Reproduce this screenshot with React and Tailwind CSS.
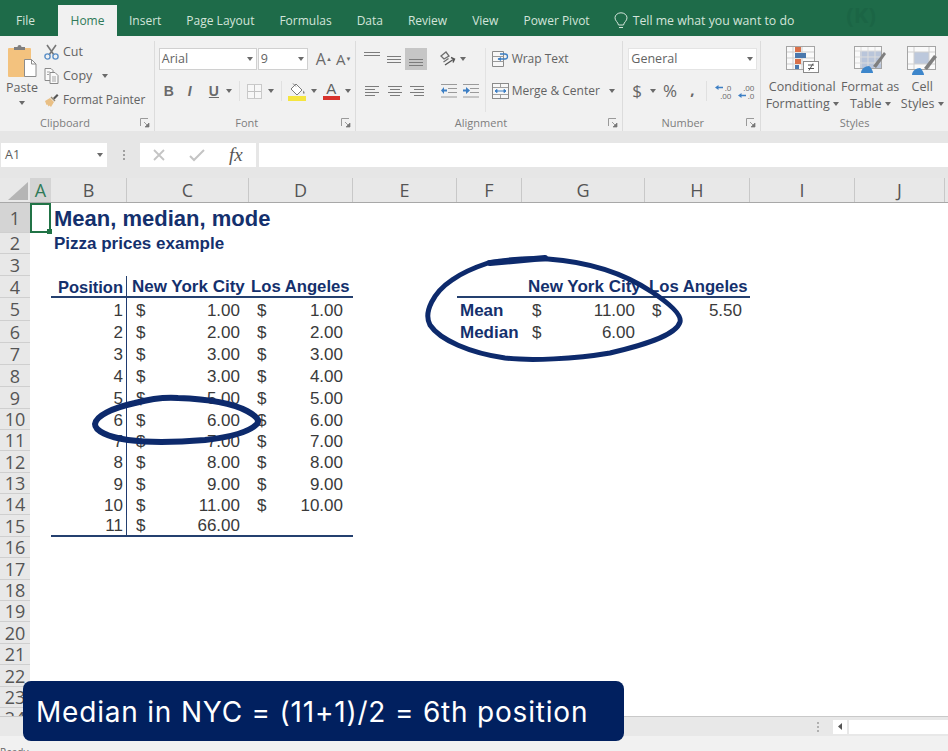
import React from 'react';

const uiFont = 'font-["Open_Sans",sans-serif]';
const cellFont = 'font-["Liberation_Sans",Arial,sans-serif]';

const tabs = ['Insert', 'Page Layout', 'Formulas', 'Data', 'Review', 'View', 'Power Pivot'];

const columns = [
  { label: 'A', w: 'w-[21px]' },
  { label: 'B', w: 'w-[76px]' },
  { label: 'C', w: 'w-[122px]' },
  { label: 'D', w: 'w-[104px]' },
  { label: 'E', w: 'w-[104px]' },
  { label: 'F', w: 'w-[65px]' },
  { label: 'G', w: 'w-[123px]' },
  { label: 'H', w: 'w-[105px]' },
  { label: 'I', w: 'w-[105px]' },
  { label: 'J', w: 'w-[90px]' },
];

const rowHeights = {
  1: 'h-[30px]', 2: 'h-[21px]', 3: 'h-[22px]', 4: 'h-[22px]', 5: 'h-[23px]', 6: 'h-[22px]',
  7: 'h-[22px]', 8: 'h-[22px]', 9: 'h-[22px]', 10: 'h-[21px]', 11: 'h-[21px]', 12: 'h-[22px]',
  13: 'h-[21px]', 14: 'h-[21px]', 15: 'h-[22px]', 16: 'h-[21px]', 17: 'h-[22px]', 18: 'h-[21px]',
  19: 'h-[21px]', 20: 'h-[22px]', 21: 'h-[21px]', 22: 'h-[22px]', 23: 'h-[21px]', 24: 'h-[21px]',
};

// rows 5-15 of the price list: position, NYC price, LA price
const prices = {
  5: ['1', '1.00', '1.00'],
  6: ['2', '2.00', '2.00'],
  7: ['3', '3.00', '3.00'],
  8: ['4', '3.00', '4.00'],
  9: ['5', '5.00', '5.00'],
  10: ['6', '6.00', '6.00'],
  11: ['7', '7.00', '7.00'],
  12: ['8', '8.00', '8.00'],
  13: ['9', '9.00', '9.00'],
  14: ['10', '11.00', '10.00'],
  15: ['11', '66.00', ''],
};

const rowNumbers = Object.keys(rowHeights).map(Number);

function Caret({ className = '' }) {
  return (
    <svg width="6" height="4" viewBox="0 0 6 4" className={`shrink-0 ${className}`}>
      <path d="M0 0h6L3 4z" fill="#6a6a6a" />
    </svg>
  );
}

function Launcher() {
  return (
    <svg width="10" height="10" viewBox="0 0 10 10" className="absolute right-[4px] top-[3px]">
      <path d="M0.5 8V0.5H8" fill="none" stroke="#9a9a9a" />
      <path d="M4 4l4 4M9 5v4H5z" fill="#777" stroke="#777" strokeWidth="0.7" />
    </svg>
  );
}

function RibbonGroup({ width, label, labelPad = '', launcher = true, children }) {
  return (
    <div className={`${width} relative flex flex-col border-r border-[#dcdcdc] mt-[5px] last:border-r-0`}>
      <div className="h-[74px] -mt-[5px] pt-[5px] shrink-0 box-content">{children}</div>
      <div className={`relative h-[16px] flex items-center justify-center text-[11px] text-[#7d7d7d] ${labelPad}`}>
        {label}
        {launcher && <Launcher />}
      </div>
    </div>
  );
}

function LinesIcon({ widths = [14, 14, 14], gap = 3, className = '', align = 'center' }) {
  const h = (widths.length - 1) * gap + 1;
  return (
    <svg width="16" height={h} viewBox={`0 0 16 ${h}`} className={className}>
      {widths.map((w, i) => {
        const x = align === 'left' ? 1 : align === 'right' ? 15 - w : 8 - w / 2;
        return <rect key={i} x={x} y={i * gap} width={w} height="1" fill="#7c7c7c" />;
      })}
    </svg>
  );
}

function PasteIcon() {
  return (
    <svg width="30" height="34" viewBox="0 0 30 34">
      <rect x="1" y="5" width="23" height="29" rx="1" fill="#f3c27e" />
      <path d="M7 7V4h3.5a2 2 0 0 1 4 0H18v3z" fill="#7f7f7f" />
      <path d="M17.5 16.500h7l4.500 4.500v12.500h-11.500z" fill="#fff" stroke="#8c8c8c" />
      <path d="M24.500 16.500v4.500h4.500" fill="none" stroke="#8c8c8c" />
    </svg>
  );
}

function ScissorsIcon() {
  return (
    <svg width="15" height="16" viewBox="0 0 15 16">
      <path d="M3 1l7 10M12 1L5 11" stroke="#777" strokeWidth="1.6" fill="none" />
      <circle cx="3.500" cy="12.500" r="2.600" fill="none" stroke="#5b8fc7" strokeWidth="1.400" />
      <circle cx="11.500" cy="12.500" r="2.600" fill="none" stroke="#5b8fc7" strokeWidth="1.400" />
    </svg>
  );
}

function CopyIcon() {
  return (
    <svg width="15" height="16" viewBox="0 0 15 16">
      <path d="M1 .5h6l2 2v10H1z" fill="#fafafa" stroke="#8a8a8a" />
      <path d="M6 4.500h5l3 3v8H6z" fill="#fafafa" stroke="#8a8a8a" />
      <path d="M3 4h3M3 6.500h2M8 9h4M8 11h4M8 13h4" stroke="#a5a5a5" />
    </svg>
  );
}

function PainterIcon() {
  return (
    <svg width="15" height="14" viewBox="0 0 15 14">
      <path d="M1 8l5-3 4 4-3 5-1.500-1.500-1 1-1-2-1 .5z" fill="#e9bf84" />
      <path d="M6.500 4.500l4 4 1-1-4-4z" fill="#9a8a70" />
      <path d="M9 5l4-4 1.500 1.500-4 4z" fill="#555" />
    </svg>
  );
}

function FillIcon() {
  return (
    <svg width="18" height="19" viewBox="0 0 18 19">
      <path d="M8 2l6 6-5 5-6-6z" fill="#fff" stroke="#7c7c7c" />
      <path d="M5 1.500l3 3" stroke="#7c7c7c" />
      <path d="M15.500 8.500c1 1.600 1.500 2.600.6 3.200-.8.400-1.600-.6-.6-3.200z" fill="#7c7c7c" />
      <rect x="0" y="14" width="18" height="5" fill="#f5e53f" />
    </svg>
  );
}

function BordersIcon() {
  return (
    <svg width="15" height="15" viewBox="0 0 15 15">
      <rect x=".5" y=".5" width="14" height="14" fill="#f7f7f7" stroke="#c9c9c9" />
      <path d="M7.500 1v13M1 7.500h13" stroke="#c2c2c2" />
    </svg>
  );
}

function OrientationIcon() {
  return (
    <svg width="17" height="16" viewBox="0 0 17 16">
      <path d="M2 5l5-4 3 4-5 3zM4.500 11l5-3.500" fill="none" stroke="#6e6e6e" strokeWidth="1.300" />
      <path d="M6 14l9-6M12 6.500l3.500 1.500-1.500 3.500" fill="none" stroke="#555" strokeWidth="1.400" />
    </svg>
  );
}

function IndentIcon({ flip = false }) {
  return (
    <svg width="16" height="14" viewBox="0 0 16 14">
      <path d="M0 .5h16M7 4.500h9M7 8.500h9M0 13h16" stroke="#9a9a9a" />
      {flip ? (
        <path d="M0 5.500h3V3l4 3.500L3 10V7.500H0z" fill="#3d7fc4" />
      ) : (
        <path d="M6 5.500H3V3L0 6.500 3 10V7.500h3z" fill="#3d7fc4" />
      )}
    </svg>
  );
}

function WrapIcon() {
  return (
    <svg width="17" height="16" viewBox="0 0 17 16">
      <path d="M.5.500h11v15H.5z" fill="#f7f7f7" stroke="#8a8a8a" />
      <path d="M.5 5.500h11M.5 10.500h11" stroke="#9a9a9a" />
      <path d="M6 8h7a2.500 2.500 0 0 0 0-5H8" fill="none" stroke="#3d7fc4" strokeWidth="1.300" />
      <path d="M9 6L5.500 8 9 10z" fill="#3d7fc4" />
    </svg>
  );
}

function MergeIcon() {
  return (
    <svg width="17" height="16" viewBox="0 0 17 16">
      <rect x=".5" y=".5" width="16" height="15" fill="#f7f7f7" stroke="#8a8a8a" />
      <path d="M8.500 1v3M8.500 12v3M1 4.500h15M1 11.500h15" stroke="#a0a0a0" />
      <path d="M3 8h11M3 8l2-1.600v3.200zM14 8l-2-1.600v3.200z" fill="#3d7fc4" stroke="#3d7fc4" />
    </svg>
  );
}

function DecimalIcon({ more = false }) {
  return (
    <div className="relative flex flex-col items-end gap-[1px] w-[16px] text-[8px] leading-[7px] text-[#6a6a6a]">
      <span>{more ? '.0' : '.00'}</span>
      <span>{more ? '.00' : '.0'}</span>
      <svg width="8" height="5" viewBox="0 0 8 5" className={`absolute left-0 ${more ? 'top-[1px]' : 'top-[9px]'}`}>
        <path d="M0 2.500L3.500 0v1.800H8v1.400H3.500V5z" fill="#3d7fc4" />
      </svg>
    </div>
  );
}

function CondFormatIcon() {
  return (
    <svg width="33" height="27" viewBox="0 0 33 27">
      <rect x=".5" y=".5" width="28" height="23" fill="#fafafa" stroke="#a5a5a5" />
      <path d="M1 6h27M1 12h27M1 18h27M7 1v22M16 1v22" stroke="#cdcdcd" />
      <rect x="9" y="1" width="6" height="5" fill="#d9714a" />
      <rect x="9" y="7" width="11" height="5" fill="#4a78ad" />
      <rect x="9" y="13" width="6" height="5" fill="#d9714a" />
      <rect x="9" y="19" width="4" height="4" fill="#4a78ad" />
      <rect x="17.500" y="15.500" width="15" height="11" fill="#fff" stroke="#8a8a8a" />
      <path d="M22 19h6M22 22.500h6M27 17.500l-4 7" stroke="#555" />
    </svg>
  );
}

function TableStyleIcon() {
  return (
    <svg width="33" height="27" viewBox="0 0 33 27">
      <rect x=".5" y=".5" width="27" height="22" fill="#fafafa" stroke="#a5a5a5" />
      <rect x="6" y="5" width="21" height="17" fill="#b9c5da" />
      <path d="M1 5h26M1 11h26M1 17h26M7 1v21M14 1v21M21 1v21" stroke="#dcdcdc" />
      <path d="M7 27c0-4 4-7 8-7 2 1 4 5 4 7z" fill="#3d86cb" />
      <path d="M19 20l11-14 2 2-10 14z" fill="#7f7f7f" />
    </svg>
  );
}

function CellStyleIcon() {
  return (
    <svg width="31" height="29" viewBox="0 0 31 29">
      <rect x=".5" y=".5" width="28" height="23" fill="#fafafa" stroke="#a5a5a5" />
      <rect x="7" y="6" width="15" height="12" fill="#bcc8dc" />
      <path d="M1 6h27M1 18h27M7 1v22M22 1v22" stroke="#d0d0d0" />
      <path d="M5 29c0-4 4-7 8-7 2 1 4 5 4 7z" fill="#3d86cb" />
      <path d="M17 22l10-13 3 2-10 13z" fill="#7f7f7f" />
    </svg>
  );
}

function Ribbon() {
  return (
    <div className={`${uiFont} flex h-[95px] shrink-0 bg-[#f1f1f1] text-[12.5px] text-[#636363]`}>
      <RibbonGroup width="w-[155px]" label="Clipboard" labelPad="pr-[24px]">
        <div className="flex">
          <div className="w-[40px] flex flex-col items-center pt-[2px] pl-[4px]">
            <PasteIcon />
            <span className="mt-[2px] leading-[17px]">Paste</span>
            <Caret className="mt-[5px]" />
          </div>
          <div className="flex flex-col pl-[4px] -mt-[1px]">
            <div className="flex items-center h-[24px] gap-[4px]">
              <ScissorsIcon />
              <span>Cut</span>
            </div>
            <div className="flex items-center h-[24px] gap-[4px]">
              <CopyIcon />
              <span>Copy</span>
              <Caret className="ml-[6px]" />
            </div>
            <div className="flex items-center h-[24px] gap-[4px]">
              <PainterIcon />
              <span className="whitespace-nowrap text-[11.800px]">Format Painter</span>
            </div>
          </div>
        </div>
      </RibbonGroup>

      <RibbonGroup width="w-[201px]" label="Font" labelPad="pr-[16px]">
        <div className="flex items-center h-[22px] mt-[7px] pl-[4px]">
          <div className="w-[98px] h-[22px] bg-white border border-[#d0d0d0] flex items-center justify-between pl-[2px] pr-[3px]">
            <span>Arial</span>
            <Caret />
          </div>
          <div className="w-[50px] h-[22px] ml-[1px] bg-white border border-[#d0d0d0] flex items-center justify-between pl-[2px] pr-[3px]">
            <span>9</span>
            <Caret />
          </div>
          <span className="ml-[8px] text-[16px] leading-[20px] text-[#6a6a6a]">A<span className="align-top text-[6px]">▲</span></span>
          <span className="ml-[4px] text-[15px] leading-[20px] text-[#6a6a6a]">A<span className="align-top text-[6px]">▼</span></span>
        </div>
        <div className={`${cellFont} flex items-center h-[22px] mt-[10px] text-[#6a6a6a] text-[14px]`}>
          <span className="ml-[9px] w-[9px] font-bold">B</span>
          <span className="ml-[15px] w-[7px] font-bold italic">I</span>
          <span className="ml-[14px] w-[11px] font-bold underline">U</span>
          <Caret className="ml-[6px]" />
          <span className="ml-[7px] w-px h-[20px] bg-[#e0e0e0]" />
          <span className="ml-[7px] flex"><BordersIcon /></span>
          <Caret className="ml-[6px]" />
          <span className="ml-[7px] w-px h-[20px] bg-[#e0e0e0]" />
          <span className="ml-[6px] flex"><FillIcon /></span>
          <Caret className="ml-[5px]" />
          <span className="ml-[6px] flex flex-col items-center w-[17px] leading-[14px]">
            <span className="text-[15px] text-[#5f5f5f] font-normal">A</span>
            <span className="w-[17px] h-[4px] bg-[#d8322b]" />
          </span>
          <Caret className="ml-[5px]" />
        </div>
      </RibbonGroup>

      <RibbonGroup width="w-[268px]" label="Alignment" labelPad="pr-[16px]">
        <div className="flex">
          <div className="w-[130px] border-r border-[#e2e2e2] h-[64px] mt-[7px]">
            <div className="flex items-center h-[22px]">
              <span className="ml-[8px] self-start mt-[4px] flex"><LinesIcon widths={[16, 16]} /></span>
              <span className="ml-[6px] flex"><LinesIcon widths={[14, 14, 14]} /></span>
              <span className="ml-[3px] w-[22px] h-[22px] bg-[#c6c6c6] flex items-center justify-center">
                <LinesIcon widths={[14, 14, 14]} className="mt-[6px]" />
              </span>
              <span className="ml-[12px] flex"><OrientationIcon /></span>
              <Caret className="ml-[4px]" />
            </div>
            <div className="flex items-center h-[22px] mt-[10px]">
              <span className="ml-[8px] flex"><LinesIcon widths={[14, 10, 14, 10]} align="left" /></span>
              <span className="ml-[7px] flex"><LinesIcon widths={[14, 10, 14, 10]} /></span>
              <span className="ml-[6px] flex"><LinesIcon widths={[14, 10, 14, 10]} align="right" /></span>
              <span className="ml-[16px] flex"><IndentIcon /></span>
              <span className="ml-[6px] flex"><IndentIcon flip /></span>
            </div>
          </div>
          <div className="pl-[6px] flex flex-col mt-[7px]">
            <div className="flex items-center h-[22px] gap-[3px]">
              <WrapIcon />
              <span className="text-[12px]">Wrap Text</span>
            </div>
            <div className="flex items-center h-[22px] mt-[10px] gap-[3px]">
              <MergeIcon />
              <span className="text-[12px] whitespace-nowrap">Merge &amp; Center</span>
              <Caret className="ml-[6px]" />
            </div>
          </div>
        </div>
      </RibbonGroup>

      <RibbonGroup width="w-[138px]" label="Number" labelPad="pr-[18px]">
        <div className="mt-[7px] ml-[5px] w-[129px] h-[22px] bg-white flex items-center justify-between pl-[2px] pr-[3px] border border-[#e4e4e4]">
          <span>General</span>
          <Caret />
        </div>
        <div className="flex items-center h-[22px] mt-[10px]">
          <span className="ml-[9px] text-[17px] text-[#666]">$</span>
          <Caret className="ml-[8px]" />
          <span className="ml-[7px] text-[17px] text-[#666]">%</span>
          <span className="ml-[13px] font-bold text-[15px] text-[#666] -mt-[4px]">,</span>
          <span className="ml-[12px] w-px h-[20px] bg-[#e0e0e0]" />
          <span className="ml-[8px]"><DecimalIcon more /></span>
          <span className="ml-[7px]"><DecimalIcon /></span>
        </div>
      </RibbonGroup>

      <RibbonGroup width="w-[187px]" label="Styles" launcher={false}>
        <div className="flex leading-[17px] text-center mt-[5px]">
          <div className="w-[80px] ml-[1px] flex flex-col items-center">
            <CondFormatIcon />
            <span className="mt-[5px]">Conditional</span>
            <span className="flex items-center gap-[3px] whitespace-nowrap">Formatting <Caret /></span>
          </div>
          <div className="w-[56px] flex flex-col items-center">
            <TableStyleIcon />
            <span className="mt-[5px] whitespace-nowrap">Format as</span>
            <span className="flex items-center gap-[3px]">Table <Caret /></span>
          </div>
          <div className="w-[48px] flex flex-col items-center">
            <CellStyleIcon />
            <span className="mt-[3px]">Cell</span>
            <span className="flex items-center gap-[3px]">Styles <Caret /></span>
          </div>
        </div>
      </RibbonGroup>
    </div>
  );
}

function FormulaBar() {
  return (
    <div className={`${uiFont} flex h-[47px] shrink-0 pt-[12px] bg-[#e6e6e6] text-[12.5px] text-[#5c5c5c]`}>
      <div className="ml-[1px] w-[106px] h-[24px] bg-white flex items-center justify-between pl-[4px] pr-[4px]">
        <span>A1</span>
        <Caret />
      </div>
      <div className="w-[33px] flex flex-col items-center justify-center h-[24px] gap-[2px]">
        <span className="w-[2px] h-[2px] bg-[#a0a0a0]" />
        <span className="w-[2px] h-[2px] bg-[#a0a0a0]" />
        <span className="w-[2px] h-[2px] bg-[#a0a0a0]" />
      </div>
      <div className="w-[116px] h-[24px] bg-white flex items-center">
        <svg width="14" height="14" viewBox="0 0 14 14" className="ml-[12px]">
          <path d="M2 2l10 10M12 2L2 12" stroke="#c4c4c4" strokeWidth="1.800" />
        </svg>
        <svg width="16" height="14" viewBox="0 0 16 14" className="ml-[23px]">
          <path d="M1 8l4 4 10-10" stroke="#c4c4c4" strokeWidth="2" fill="none" />
        </svg>
        <span className="ml-[24px] font-['Liberation_Serif',serif] italic text-[19px] text-[#555]">fx</span>
      </div>
      <div className="ml-[3px] flex-1 h-[24px] bg-white" />
    </div>
  );
}

function ColumnHeaders() {
  return (
    <div className={`${uiFont} flex h-[25px] shrink-0 bg-[#e8e8e8] border-b border-[#a8a8a8] text-[18px] text-[#555]`}>
      <div className="w-[30px] relative">
        <svg width="20" height="18" viewBox="0 0 20 18" className="absolute left-[8px] bottom-[2px]">
          <path d="M20 0v18H0z" fill="#b5b5b5" />
        </svg>
      </div>
      {columns.map((col) => (
        <div
          key={col.label}
          className={`${col.w} flex items-center justify-center border-r border-[#c8c8c8] ${col.label === 'A' ? 'bg-[#d4d4d4] text-[#2f7a58] border-r-0' : ''}`}
        >
          {col.label}
        </div>
      ))}
      <div className="flex-1" />
    </div>
  );
}

function SheetRow({ n }) {
  const inTable = n >= 4 && n <= 15;
  const ruled = n === 4 || n === 15;
  const price = prices[n];
  const ruleClass = ruled ? 'border-b-2 border-[#24406f]' : '';
  const topRule = n === 4 ? 'border-b-2 border-[#24406f]' : '';

  return (
    <div className={`${rowHeights[n]} flex shrink-0 box-border leading-[18px]`}>
      <div className={`${uiFont} w-[30px] shrink-0 flex items-center justify-center border-b border-[#cfcfcf] text-[18px] leading-[18px] text-[#555] ${n === 1 ? 'bg-[#d4d4d4]' : 'bg-[#e8e8e8]'}`}>
        {n}
      </div>
      <div className={`w-[21px] shrink-0 relative ${n === 1 ? 'border-2 border-[#217346]' : ''}`}>
        {n === 1 && <span className="absolute -right-[3px] -bottom-[3px] w-[5px] h-[5px] bg-[#217346]" />}
      </div>

      <div className={`w-[76px] shrink-0 flex items-center whitespace-nowrap box-border ${n === 2 ? '' : 'pt-[2px]'} ${inTable ? 'border-r border-[#1f3a70] justify-end pr-[3px]' : 'pl-[3px]'} ${ruleClass}`}>
        {n === 1 && <span className="text-[22px] leading-[26px] font-bold text-[#14306d]">Mean, median, mode</span>}
        {n === 2 && <span className="font-bold text-[#14306d]">Pizza prices example</span>}
        {n === 4 && <span className="text-[16.500px] font-bold text-[#14306d]">Position</span>}
        {price && <span>{price[0]}</span>}
      </div>

      <div className={`w-[122px] shrink-0 flex items-center justify-between pt-[2px] pl-[9px] pr-[9px] whitespace-nowrap box-border ${ruleClass}`}>
        {n === 4 && <span className="font-bold text-[#14306d] -ml-[4px]">New York City</span>}
        {price && <span>$</span>}
        {price && <span>{price[1]}</span>}
      </div>

      <div className={`w-[104px] shrink-0 flex items-center justify-between pt-[2px] pl-[8px] pr-[10px] whitespace-nowrap box-border ${ruleClass}`}>
        {n === 4 && <span className="text-[16.700px] font-bold text-[#14306d] -ml-[6px]">Los Angeles</span>}
        {price && price[2] && <span>$</span>}
        {price && price[2] && <span>{price[2]}</span>}
      </div>

      <div className="w-[104px] shrink-0" />

      <div className={`w-[65px] shrink-0 flex items-center pt-[2px] pl-[3px] box-border ${topRule}`}>
        {n === 5 && <span className="font-bold text-[#14306d]">Mean</span>}
        {n === 6 && <span className="font-bold text-[#14306d]">Median</span>}
      </div>

      <div className={`w-[123px] shrink-0 flex items-center justify-between pt-[2px] pl-[10px] pr-[10px] whitespace-nowrap box-border ${topRule}`}>
        {n === 4 && <span className="font-bold text-[#14306d] -ml-[4px]">New York City</span>}
        {(n === 5 || n === 6) && <span>$</span>}
        {n === 5 && <span>11.00</span>}
        {n === 6 && <span>6.00</span>}
      </div>

      <div className={`w-[105px] shrink-0 flex items-center justify-between pt-[2px] pl-[7px] pr-[8px] whitespace-nowrap box-border ${topRule}`}>
        {n === 4 && <span className="text-[16.700px] font-bold text-[#14306d] -ml-[3px]">Los Angeles</span>}
        {n === 5 && <span>$</span>}
        {n === 5 && <span>5.50</span>}
      </div>
    </div>
  );
}

function PenMarks() {
  return (
    <svg width="948" height="751" viewBox="0 0 948 751" className="absolute inset-0 pointer-events-none">
      <g fill="none" stroke="#0d2a6c" strokeLinecap="round" strokeLinejoin="round">
        <path
          strokeWidth="6"
          d="M135 403C150 399 165 397 178 398C205 399 232 403 247 411C256 416 260 420 257 424C250 431 232 437 205 440C180 442 150 443 128 440C108 437 95 431 95 424C96 416 112 408 135 403"
        />
        <path
          strokeWidth="5"
          d="M488 263C510 259 530 258 548 259C590 262 625 274 652 292C670 304 682 315 680 322C676 336 640 346 610 353C575 359 530 361 505 358C470 353 440 340 430 325C423 312 434 292 452 280C463 272 476 267 488 263"
        />
        <path strokeWidth="6" d="M490 263L545 258" />
      </g>
    </svg>
  );
}

export default function App() {
  return (
    <div className="relative w-[948px] h-[751px] overflow-hidden flex flex-col bg-white">
      <div className={`${uiFont} flex items-end h-[36px] shrink-0 bg-[#1e6b49] text-[12px] text-[#d3e4da]`}>
        <span className="ml-[16px] h-[31px] leading-[31px] w-[19px]">File</span>
        <span className="ml-[23px] w-[59px] h-[31px] leading-[31px] bg-[#f1f1f1] text-center text-[#2f7a58]">Home</span>
        <div className="flex gap-[25px] pl-[12px]">
          {tabs.map((tab) => (
            <span key={tab} className="h-[31px] leading-[31px] whitespace-nowrap">{tab}</span>
          ))}
        </div>
        <svg width="14" height="18" viewBox="0 0 14 18" className="ml-[24px] mb-[6px]">
          <path d="M4.500 13C4 10 1 9 1 5.800A6 5 0 0 1 13 5.800C13 9 10 10 9.500 13zM5 15.500h4" fill="none" stroke="#d3e4da" />
        </svg>
        <span className="ml-[5px] h-[31px] leading-[31px] whitespace-nowrap text-[12.300px]">Tell me what you want to do</span>
        <span className="ml-[52px] mb-[9px] text-[22px] font-bold leading-[26px] text-[#1b6545]">(K)</span>
      </div>

      <Ribbon />
      <FormulaBar />
      <ColumnHeaders />

      <div className={`${cellFont} flex-1 overflow-hidden text-[17px] text-[#3a3a3a]`}>
        {rowNumbers.map((n) => (
          <SheetRow key={n} n={n} />
        ))}
      </div>

      <div className="flex items-center justify-end h-[20px] shrink-0 bg-[#e8e8e8] border-t border-[#c9c9c9]">
        <div className="flex flex-col gap-[2px] mr-[14px]">
          <span className="w-[2px] h-[2px] bg-[#b0b0b0]" />
          <span className="w-[2px] h-[2px] bg-[#b0b0b0]" />
          <span className="w-[2px] h-[2px] bg-[#b0b0b0]" />
        </div>
        <div className="w-[14px] h-[14px] bg-white flex items-center justify-center">
          <svg width="4" height="7" viewBox="0 0 4 7"><path d="M4 0v7L0 3.500z" fill="#555" /></svg>
        </div>
        <div className="ml-[2px] w-[99px] h-[14px] bg-white" />
      </div>
      <div className={`${uiFont} h-[15px] shrink-0 bg-[#f1f1f1] pt-[10px] text-[10px] leading-[12px] text-[#666]`}>Ready</div>

      <PenMarks />

      <div className="absolute left-[23px] top-[681px] w-[601px] h-[60px] rounded-lg bg-[#01205f] flex items-center pl-[13px] pt-[2px] font-['Inter',sans-serif] text-[28px] tracking-[0.8px] text-white whitespace-nowrap">
        Median in NYC = (11+1)/2 = 6th position
      </div>
    </div>
  );
}
